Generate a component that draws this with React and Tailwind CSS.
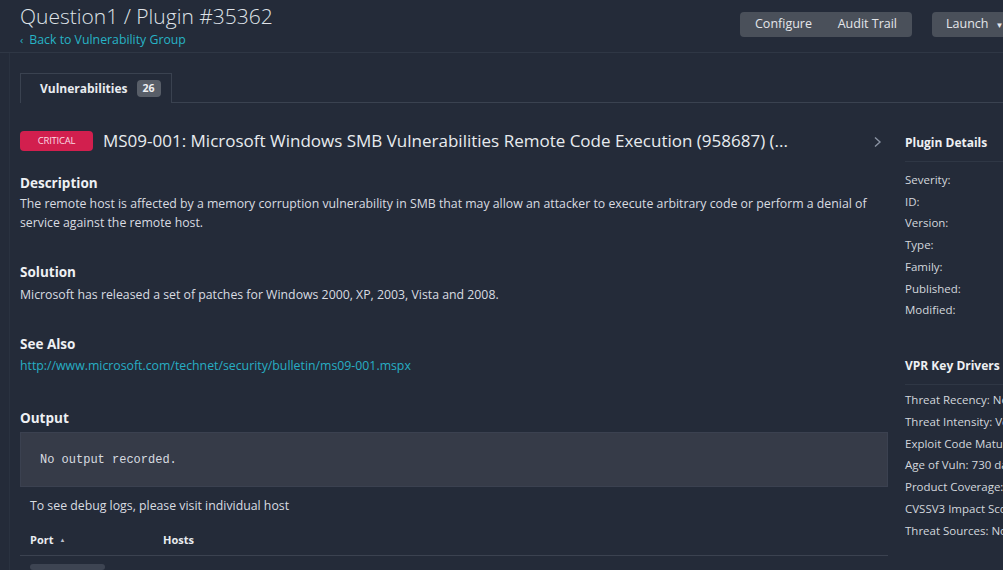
import React from "react";

const pluginDetails = ["Severity:", "ID:", "Version:", "Type:", "Family:", "Published:", "Modified:"];

const vprDrivers = [
  "Threat Recency: No recorded events",
  "Threat Intensity: Very Low",
  "Exploit Code Maturity: High",
  "Age of Vuln: 730 days +",
  "Product Coverage: Low",
  "CVSSV3 Impact Score: 5.9",
  "Threat Sources: No recorded events",
];

function Section({ title, children, className = "" }) {
  return (
    <div className={className}>
      <h3 className="text-[13.5px] font-bold text-[#eef0f3] leading-[22px]">{title}</h3>
      {children}
    </div>
  );
}

function App() {
  return (
    <div
      className="w-[1003px] h-[570px] overflow-hidden bg-[#242b39] text-[#d3d7dd]"
      style={{ fontFamily: '"Open Sans", "Liberation Sans", sans-serif' }}
    >
      {/* Header */}
      <div className="flex items-start justify-between border-b border-[#2f3745] h-[53px] pl-5">
        <div className="pt-[2px]">
          <h1 className="text-[21px] font-light text-[#dfe3e8] leading-[28px]">
            Question1 / Plugin #35362
          </h1>
          <a className="flex items-center gap-[6px] text-[12.3px] text-[#27b3c6] leading-[16px] mt-[2px]">
            <span className="text-[11px]">‹</span> Back to Vulnerability Group
          </a>
        </div>
        <div className="flex items-center gap-5 mt-3 w-[263px] shrink-0">
          <div className="flex h-[25px] w-[172px] shrink-0 items-center justify-between rounded-sm bg-[#4a505a] px-[15px] text-[12.5px] text-[#e4e6ea] whitespace-nowrap">
            <button>Configure</button>
            <button>Audit Trail</button>
          </div>
          <button className="flex h-[25px] w-[90px] shrink-0 items-center gap-[7px] rounded-sm bg-[#4a505a] pl-[14px] text-[12.5px] text-[#e4e6ea] whitespace-nowrap">
            Launch <span className="text-[8px]">▼</span>
          </button>
        </div>
      </div>

      <div className="border-l border-[#2a3240] ml-[9px] pl-[10px]">
        {/* Tabs */}
        <div className="flex border-b border-[#3a4250] pt-[20px]">
          <div className="flex items-center gap-[9px] h-[30px] w-[152px] border border-b-0 border-[#3a4250] pl-[19px] -mb-px bg-[#242b39]">
            <span className="text-[12px] font-bold text-[#e9ecf0]">Vulnerabilities</span>
            <span className="rounded-sm bg-[#585e68] px-[6px] text-[10.5px] font-bold leading-[17px] text-[#eef0f3]">
              26
            </span>
          </div>
        </div>

        <div className="flex">
          {/* Main column */}
          <div className="w-[868px] shrink-0">
            <div className="flex items-center h-[20px] mt-[28px]">
              <span className="flex h-[20px] w-[73px] items-center justify-center rounded-sm bg-[#d21f4e] text-[9.5px] tracking-tight text-[#fbdbe3]">
                CRITICAL
              </span>
              <h2 className="ml-[10px] flex-1 text-[17px] leading-[20px] text-[#e8ebef] whitespace-nowrap">
                MS09-001: Microsoft Windows SMB Vulnerabilities Remote Code Execution (958687) (...
              </h2>
              <svg width="9" height="12" viewBox="0 0 9 12" className="mr-[6px] mt-[2px]">
                <path d="M2 1.5 L7 6 L2 10.5" fill="none" stroke="#8a93a3" strokeWidth="1.4" />
              </svg>
            </div>

            <Section title="Description" className="mt-[21px]">
              <p className="text-[12.3px] leading-[19px] text-[#d9dce1]">
                The remote host is affected by a memory corruption vulnerability in SMB that may allow an attacker to execute arbitrary code or perform a denial of service against the remote host.
              </p>
            </Section>

            <Section title="Solution" className="mt-[29px]">
              <p className="mt-[2px] text-[12.3px] leading-[19px] text-[#d9dce1]">
                Microsoft has released a set of patches for Windows 2000, XP, 2003, Vista and 2008.
              </p>
            </Section>

            <Section title="See Also" className="mt-[29px]">
              <a className="block mt-[1px] text-[12.3px] leading-[19px] text-[#27aec4]">
                http://www.microsoft.com/technet/security/bulletin/ms09-001.mspx
              </a>
            </Section>

            <Section title="Output" className="mt-[32px]">
              <div className="mt-[3px] h-[55px] flex items-center bg-[#363b48] border border-[#3b4150] pl-[19px]">
                <pre
                  className="text-[12px] text-[#d8dbe0]"
                  style={{ fontFamily: '"Liberation Mono", "DejaVu Sans Mono", monospace' }}
                >
                  No output recorded.
                </pre>
              </div>
              <p className="text-[12.3px] leading-[19px] text-[#d9dce1] pl-[10px] mt-[9px]">
                To see debug logs, please visit individual host
              </p>
              <div className="flex items-center h-[30px] mt-[11px] border-b border-[#3b4250] pl-[10px] text-[11px] font-bold text-[#e9ecf0]">
                <span className="w-[133px] flex items-center gap-[6px]">
                  Port <span className="text-[6px] text-[#b8bec8]">▲</span>
                </span>
                <span>Hosts</span>
              </div>
              <div className="flex items-center pl-[10px] pt-[8px]">
                <span className="h-[6px] w-[75px] rounded-sm bg-[#3d4452]" />
              </div>
            </Section>
          </div>

          {/* Right panel */}
          <div className="ml-[17px] w-[230px] shrink-0 pt-[30px]">
            <div className="border-b border-[#2f3745] pb-[8px]">
              <h3 className="text-[12px] font-bold text-[#eef0f3] leading-[20px]">Plugin Details</h3>
            </div>
            <div className="mt-[7px]">
              {pluginDetails.map((k) => (
                <div key={k} className="text-[11.5px] leading-[21.7px] text-[#d3d7dd]">
                  {k}
                </div>
              ))}
            </div>
            <div className="mt-[35px] border-b border-[#2f3745] pb-[8px]">
              <h3 className="text-[12px] font-bold text-[#eef0f3] leading-[20px]">VPR Key Drivers</h3>
            </div>
            <div className="mt-[4px]">
              {vprDrivers.map((d) => (
                <div key={d} className="text-[11.5px] leading-[21.8px] text-[#d3d7dd] whitespace-nowrap">
                  {d}
                </div>
              ))}
            </div>
          </div>
        </div>
      </div>
    </div>
  );
}

export default App;
